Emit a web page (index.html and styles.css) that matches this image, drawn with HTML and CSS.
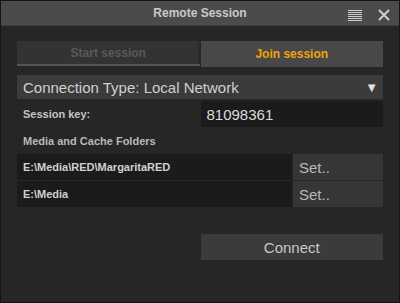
FILE: index.html
```html
<!DOCTYPE html>
<html lang="en">
<head>
  <meta charset="UTF-8" />
  <title>Remote Session</title>
  <link rel="stylesheet" href="styles.css">
</head>
<body>
  <div class="window">
    <div class="titlebar">
      <span class="title">Remote Session</span>
      <div class="title-icons">
        <svg class="menu-icon" width="14" height="11" viewBox="0 0 14 11">
          <path d="M0 0.5h14M0 2.5h14M0 4.5h14M0 6.5h14M0 8.5h14M0 10.5h14" stroke="#cfcfcf" stroke-width="1"/>
        </svg>
        <svg class="close-icon" width="12" height="12" viewBox="0 0 12 12">
          <path d="M1 1L11 11M11 1L1 11" stroke="#cfcfcf" stroke-width="2"/>
        </svg>
      </div>
    </div>

    <div class="content">
      <div class="tabs">
        <div class="tab tab-off">Start session</div>
        <div class="tab tab-on">Join session</div>
      </div>

      <div class="dropdown">
        <span>Connection Type: Local Network</span>
        <span class="arrow">&#9660;</span>
      </div>

      <div class="key-row">
        <span class="label">Session key:</span>
        <div class="field">81098361</div>
      </div>

      <div class="section">Media and Cache Folders</div>

      <div class="folders">
        <div class="folder-row">
          <div class="path">E:\Media\RED\MargaritaRED</div>
          <div class="set-btn">Set..</div>
        </div>
        <div class="folder-row">
          <div class="path">E:\Media</div>
          <div class="set-btn">Set..</div>
        </div>
      </div>

      <div class="actions">
        <div></div>
        <div class="connect">Connect</div>
      </div>
    </div>
  </div>
</body>
</html>
```

FILE: styles.css
```css
:root {
  --font-ui: 'Liberation Sans', Arial, sans-serif;
  --bg-window: #262626;
  --bg-title: #4b4b4b;
  --bg-raised: #3b3b3b;
  --bg-field: #1b1b1b;
  --text-main: #d2d2d2;
  --text-label: #c4c4c4;
  --accent: #f0a30a;
}
*, *::before, *::after { box-sizing: border-box; }

html, body {
  margin: 0;
  padding: 0;
  background: var(--bg-window);
}
body {
  font-family: var(--font-ui);
  color: var(--text-main);
}
.window {
  width: 400px;
  height: 303px;
  border: 1px solid #141414;
  background: var(--bg-window);
  display: flex;
  flex-direction: column;
}
.titlebar {
  height: 25px;
  background: var(--bg-title);
  border-bottom: 1px solid #3e3e3e;
  display: flex;
  align-items: center;
  justify-content: center;
  position: relative;
}
.title {
  font-size: 12px;
  font-weight: 700;
  color: #c9c9c9;
}
.title-icons {
  position: absolute;
  right: 9px;
  top: 7px;
  display: flex;
  align-items: center;
  gap: 16px;
}
.menu-icon { margin-top: 2px; }

.content {
  padding: 15px 16px 0;
}
.tabs {
  display: grid;
  grid-template-columns: 1fr 1fr;
  gap: 1px;
  align-items: start;
}
.tab {
  display: flex;
  align-items: center;
  justify-content: center;
  font-size: 12px;
  font-weight: 700;
}
.tab-off {
  height: 25px;
  background: #333;
  color: #595959;
  border-bottom: 2px solid #555;
  box-shadow: inset -2px 0 0 #2a2a2a;
}
.tab-on {
  height: 26px;
  background: #484848;
  color: var(--accent);
}

.dropdown {
  margin-top: 8px;
  height: 24px;
  background: var(--bg-raised);
  display: flex;
  align-items: center;
  justify-content: space-between;
  padding: 0 5px 0 6px;
  font-size: 15px;
  color: #d0d0d0;
}
.arrow {
  font-size: 13px;
  color: #e0e0e0;
}

.key-row {
  margin-top: 2px;
  display: grid;
  grid-template-columns: 1fr 1fr;
  gap: 1px;
  height: 26px;
}
.label {
  font-size: 11px;
  font-weight: 700;
  color: var(--text-label);
  display: flex;
  align-items: center;
  padding-left: 6px;
}
.field {
  background: var(--bg-field);
  font-size: 15px;
  color: #dcdcdc;
  display: flex;
  align-items: center;
  padding-left: 6px;
}

.section {
  height: 27px;
  display: flex;
  align-items: center;
  padding-left: 6px;
  font-size: 11px;
  font-weight: 700;
  color: #b9b9b9;
}

.folders {
  display: flex;
  flex-direction: column;
  gap: 1px;
}
.folder-row {
  display: grid;
  grid-template-columns: 1fr 90px;
  gap: 1px;
  height: 26px;
}
.path {
  background: var(--bg-field);
  font-size: 11px;
  font-weight: 700;
  color: #d0d0d0;
  display: flex;
  align-items: center;
  padding-left: 6px;
}
.set-btn {
  background: #363636;
  font-size: 15px;
  color: #b8b8b8;
  display: flex;
  align-items: center;
  padding-left: 6px;
}

.actions {
  margin-top: 27px;
  display: grid;
  grid-template-columns: 1fr 1fr;
  gap: 1px;
}
.connect {
  height: 26px;
  background: var(--bg-raised);
  font-size: 15px;
  color: #c8c8c8;
  display: flex;
  align-items: center;
  justify-content: center;
}
```
